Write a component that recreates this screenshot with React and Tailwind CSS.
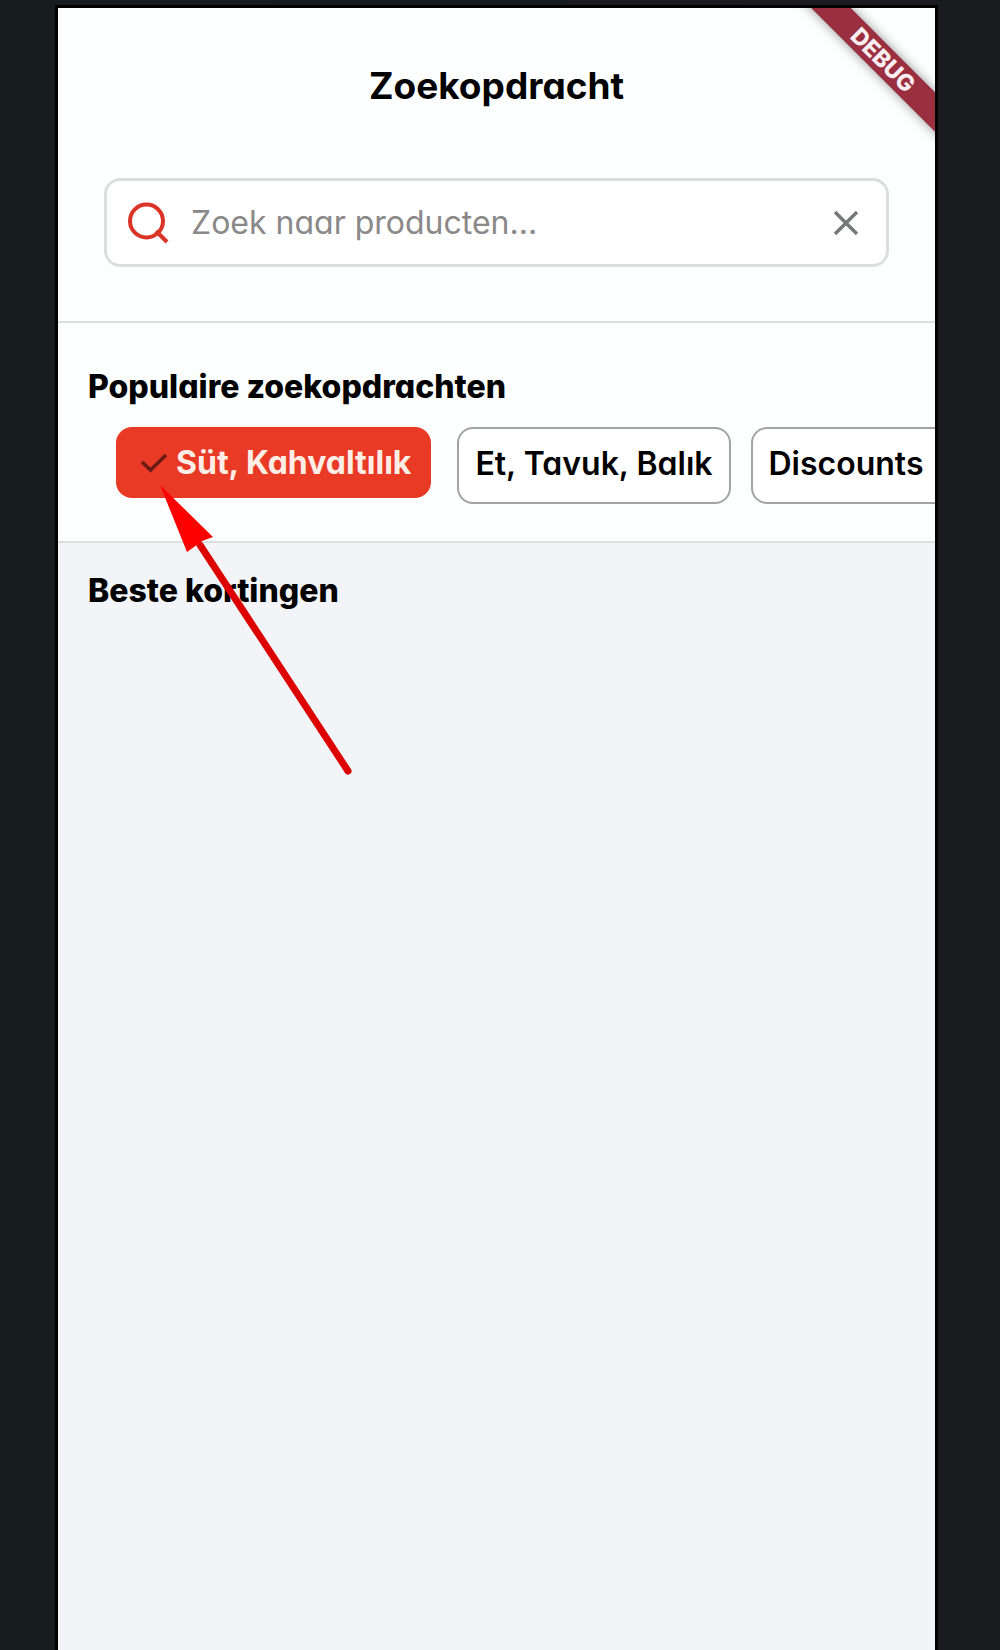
import { useState } from "react";

const categories = [
  { id: "breakfast", label: "Süt, Kahvaltılık" },
  { id: "meat", label: "Et, Tavuk, Balık" },
  { id: "discounts", label: "Discounts" },
];

const SearchIcon = () => (
  <svg
    className="size-11 shrink-0 text-[#dc3327]"
    viewBox="0 0 44 44"
    fill="none"
    stroke="currentColor"
    strokeWidth={4}
    aria-hidden="true"
  >
    <circle cx="19.5" cy="20" r="16.5" />
    <path d="M29 30L40 41" />
  </svg>
);

const CloseIcon = () => (
  <svg
    className="size-6"
    viewBox="0 0 24 24"
    fill="none"
    stroke="currentColor"
    strokeWidth={3.5}
    aria-hidden="true"
  >
    <path d="M1 1L23 23M23 1L1 23" />
  </svg>
);

const CheckIcon = () => (
  <svg
    className="h-5 w-7 shrink-0 text-[#6b1a14]"
    viewBox="0 0 28 20"
    fill="none"
    stroke="currentColor"
    strokeWidth={3.5}
    aria-hidden="true"
  >
    <path d="M2 9L10.5 17L26 2" />
  </svg>
);

const DebugBanner = () => (
  <div className="pointer-events-none absolute top-0 right-0 size-40 overflow-hidden">
    <div className="absolute top-[38px] -right-[58px] flex h-7 w-[220px] rotate-45 items-center justify-center bg-[#9a2f40] text-[23px] font-extrabold text-[#fbeef2] shadow-[0_0_12px_rgba(0,0,0,0.4)]">
      DEBUG
    </div>
  </div>
);

const PointerArrow = () => (
  <svg
    className="pointer-events-none absolute top-[471px] left-[98px] h-[300px] w-[200px]"
    viewBox="0 0 200 300"
    aria-hidden="true"
  >
    <path d="M44 66L192 292" stroke="#dc0000" strokeWidth={7} strokeLinecap="round" />
    <path d="M4 6L57 58L46 62L38 68L31 73Z" fill="#fe0000" />
  </svg>
);

const CategoryChip = ({ label, selected, onClick }) => (
  <button
    type="button"
    aria-pressed={selected}
    onClick={onClick}
    className={
      selected
        ? "mr-1.5 flex h-[71px] shrink-0 items-center gap-2 rounded-2xl bg-[#e93a26] pr-5 pl-6 text-[32px] font-bold whitespace-nowrap text-[#ffeee6]"
        : "flex h-[77px] min-w-[220px] shrink-0 items-center rounded-2xl border-2 border-[#a3a3a3] bg-white px-4 pb-1 text-[32px] font-semibold whitespace-nowrap text-black"
    }
  >
    {selected && <CheckIcon />}
    {label}
  </button>
);

export default function App() {
  const [query, setQuery] = useState("");
  const [selectedId, setSelectedId] = useState("breakfast");

  return (
    <div className="flex min-h-screen bg-linear-to-r from-[#171c1e] to-[#1a1b1e] pt-[5px] pr-[62px] pl-[55px] font-['Inter','Noto_Sans',sans-serif] [font-feature-settings:'cv11']">
      <main className="relative flex min-w-0 flex-1 flex-col overflow-hidden border-x-[3px] border-t-[3px] border-black bg-[#f3f4f8]">
        <header className="border-b-2 border-[#dcdedf] bg-[#fdfefe] px-[46px] pt-[58px] pb-[54px]">
          <h1 className="text-center text-[37px] leading-10 font-bold text-black">
            Zoekopdracht
          </h1>
          <div className="mt-[72px] flex h-[89px] items-center rounded-2xl border-[3px] border-[#dcdede] bg-white pr-7 pl-5">
            <SearchIcon />
            <input
              type="text"
              aria-label="Zoek naar producten"
              placeholder="Zoek naar producten..."
              value={query}
              onChange={(e) => setQuery(e.target.value)}
              className="ml-5 min-w-0 flex-1 bg-transparent text-[32px] text-black outline-none placeholder:text-[#8a8888]"
            />
            <button
              type="button"
              aria-label="Wissen"
              className="text-[#777878]"
              onClick={() => setQuery("")}
            >
              <CloseIcon />
            </button>
          </div>
        </header>

        <section className="border-b-2 border-[#dcdee0] bg-[#fdfefe] pt-11 pb-[37px]">
          <h2 className="px-[30px] text-[32px] leading-10 font-extrabold text-black">
            Populaire zoekopdrachten
          </h2>
          <div className="mt-5 flex items-start gap-5 overflow-hidden pl-[58px]">
            {categories.map((category) => (
              <CategoryChip
                key={category.id}
                label={category.label}
                selected={category.id === selectedId}
                onClick={() => setSelectedId(category.id)}
              />
            ))}
          </div>
        </section>

        <section className="pt-7">
          <h2 className="px-[30px] text-[32px] leading-10 font-extrabold text-black">
            Beste kortingen
          </h2>
        </section>

        <PointerArrow />
        <DebugBanner />
      </main>
    </div>
  );
}
